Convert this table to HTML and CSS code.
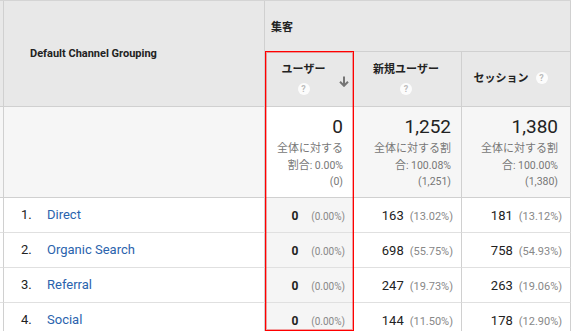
FILE: index.html
```html
<!DOCTYPE html>
<html lang="ja">
<head>
<meta charset="utf-8">
<title>集客レポート</title>
<link rel="stylesheet" href="styles.css">
</head>
<body>
<div class="wrap">
  <table class="report">
    <colgroup>
      <col class="c0"><col class="c1"><col class="c2"><col class="c3"><col class="c4">
    </colgroup>
    <thead>
      <tr class="h1">
        <th class="stub" rowspan="2"></th>
        <th class="dim" rowspan="2">Default Channel Grouping</th>
        <th class="group" colspan="3">集客</th>
      </tr>
      <tr class="h2">
        <th class="metric m-users">
          <div class="sortable">
            <div class="mlabel">
              <div class="mtext">ユーザー</div>
              <span class="help help-below">?</span>
            </div>
            <svg class="arrow" width="10" height="11" viewBox="0 0 10 11" aria-hidden="true">
              <path d="M5 0.5V9.5M1 5.8L5 9.8L9 5.8" fill="none" stroke="#757575" stroke-width="2"/>
            </svg>
          </div>
        </th>
        <th class="metric m-new">
          <div class="mtext">新規ユーザー</div>
          <span class="help help-below">?</span>
        </th>
        <th class="metric m-sess">
          <span class="mtext">セッション</span><span class="help help-inline">?</span>
        </th>
      </tr>
    </thead>
    <tbody>
      <tr class="summary">
        <td class="stub"></td>
        <td class="blank"></td>
        <td class="total sorted">
          <div class="big">0</div>
          <div class="sub">全体に対する</div>
          <div class="sub">割合<span class="lat">: 0.00%</span></div>
          <div class="sub sub-last"><span class="lat">(0)</span></div>
        </td>
        <td class="total">
          <div class="big">1,252</div>
          <div class="sub">全体に対する割</div>
          <div class="sub">合<span class="lat">: 100.08%</span></div>
          <div class="sub sub-last"><span class="lat">(1,251)</span></div>
        </td>
        <td class="total last">
          <div class="big">1,380</div>
          <div class="sub">全体に対する割</div>
          <div class="sub">合<span class="lat">: 100.00%</span></div>
          <div class="sub sub-last"><span class="lat">(1,380)</span></div>
        </td>
      </tr>
      <tr class="row">
        <td class="stub"></td>
        <td class="name"><span class="idx">1.</span><a class="link">Direct</a></td>
        <td class="val sorted"><b class="n0">0</b><span class="p0">(0.00%)</span></td>
        <td class="val"><span class="n">163</span><span class="p">(13.02%)</span></td>
        <td class="val last"><span class="n">181</span><span class="p">(13.12%)</span></td>
      </tr>
      <tr class="row">
        <td class="stub"></td>
        <td class="name"><span class="idx">2.</span><a class="link">Organic Search</a></td>
        <td class="val sorted"><b class="n0">0</b><span class="p0">(0.00%)</span></td>
        <td class="val"><span class="n">698</span><span class="p">(55.75%)</span></td>
        <td class="val last"><span class="n">758</span><span class="p">(54.93%)</span></td>
      </tr>
      <tr class="row">
        <td class="stub"></td>
        <td class="name"><span class="idx">3.</span><a class="link">Referral</a></td>
        <td class="val sorted"><b class="n0">0</b><span class="p0">(0.00%)</span></td>
        <td class="val"><span class="n">247</span><span class="p">(19.73%)</span></td>
        <td class="val last"><span class="n">263</span><span class="p">(19.06%)</span></td>
      </tr>
      <tr class="row">
        <td class="stub"></td>
        <td class="name"><span class="idx">4.</span><a class="link">Social</a></td>
        <td class="val sorted"><b class="n0">0</b><span class="p0">(0.00%)</span></td>
        <td class="val"><span class="n">144</span><span class="p">(11.50%)</span></td>
        <td class="val last"><span class="n">178</span><span class="p">(12.90%)</span></td>
      </tr>
    </tbody>
  </table>
  <div class="highlight"></div>
</div>
</body>
</html>
```
FILE: styles.css
```css
html, body {
  margin: 0;
  padding: 0;
  background: #fff;
  overflow: hidden;
}
body {
  font-family: Roboto, "Noto Sans CJK JP", sans-serif;
  color: #222;
}
.wrap {
  position: relative;
  width: 572px;
}
.report {
  border-collapse: separate;
  border-spacing: 0;
  table-layout: fixed;
  width: 571px;
  border-top: 1px solid #d4d4d4;
}
.c0 { width: 4px; }
.c1 { width: 261px; }
.c2 { width: 89px; }
.c3 { width: 108px; }
.c4 { width: 109px; }

.report th, .report td {
  box-sizing: border-box;
  padding: 0;
  border-right: 1px solid #d0d0d0;
  border-bottom: 1px solid #d0d0d0;
}
.report th {
  background: #e8e8e8;
  font-size: 11px;
  font-weight: bold;
  color: #222;
}
.h1 { height: 51px; }
.h2 { height: 55px; }
.dim {
  text-align: left;
  padding-left: 26px !important;
  vertical-align: middle;
}
.group {
  text-align: left;
  padding-left: 6px !important;
  vertical-align: middle;
}
.metric {
  vertical-align: middle;
  text-align: center;
  line-height: 14px;
}
.m-new { padding-right: 3px !important; }
.m-sess { padding-right: 11px !important; }
.sortable {
  display: flex;
  align-items: center;
  padding-left: 3px;
  padding-right: 4px;
}
.mlabel {
  flex: 1;
  text-align: center;
}
.arrow {
  display: block;
  margin-top: 5px;
}
.help {
  display: inline-block;
  width: 12px;
  height: 12px;
  border-radius: 50%;
  background: #fcfcfc;
  color: #bdbdbd;
  font-family: Roboto, sans-serif;
  font-size: 9px;
  font-weight: bold;
  line-height: 12px;
  text-align: center;
  vertical-align: middle;
}
.help-below { margin-top: 6px; }
.help-inline { margin-left: 7px; margin-top: -2px; }

.summary { height: 91px; }
.summary td { background: #f6f6f6; vertical-align: top; }
.summary td.sorted { background: #fff; }
.total {
  text-align: right;
  padding: 7px 10px 0 0 !important;
}
.total.last { padding-right: 12px !important; }
.big {
  font-size: 19px;
  line-height: 26px;
  color: #222;
}
.sub {
  font-size: 11px;
  line-height: 17px;
  color: #777;
  white-space: nowrap;
}
.sub-last { line-height: 15px; }
.lat { font-size: 10.5px; }

.row { height: 35px; }
.row td {
  border-bottom-color: #e0e0e0;
  vertical-align: middle;
  background: #fff;
  padding-bottom: 2px !important;
}
.row td.sorted { background: #f5f5f5; }
.name {
  padding-left: 17px !important;
  font-size: 13px;
  white-space: nowrap;
}
.idx {
  display: inline-block;
  width: 26px;
  color: #222;
}
.link {
  color: #2a63ad;
  text-decoration: none;
}
.val {
  text-align: right;
  padding-right: 8px !important;
  white-space: nowrap;
}
.n0 {
  font-size: 12px;
  font-weight: bold;
  color: #222;
}
.p0 {
  font-size: 10px;
  color: #888;
  margin-left: 13px;
}
.n {
  font-size: 13px;
  color: #222;
}
.p {
  font-size: 11px;
  color: #888;
  margin-left: 6px;
}
.highlight {
  position: absolute;
  left: 265px;
  top: 51px;
  width: 89px;
  height: 280px;
  box-sizing: border-box;
  border: 1px solid #ff0000;
  box-shadow: inset 0 0 0 1px rgba(235, 0, 0, 0.35);
  pointer-events: none;
}
```
